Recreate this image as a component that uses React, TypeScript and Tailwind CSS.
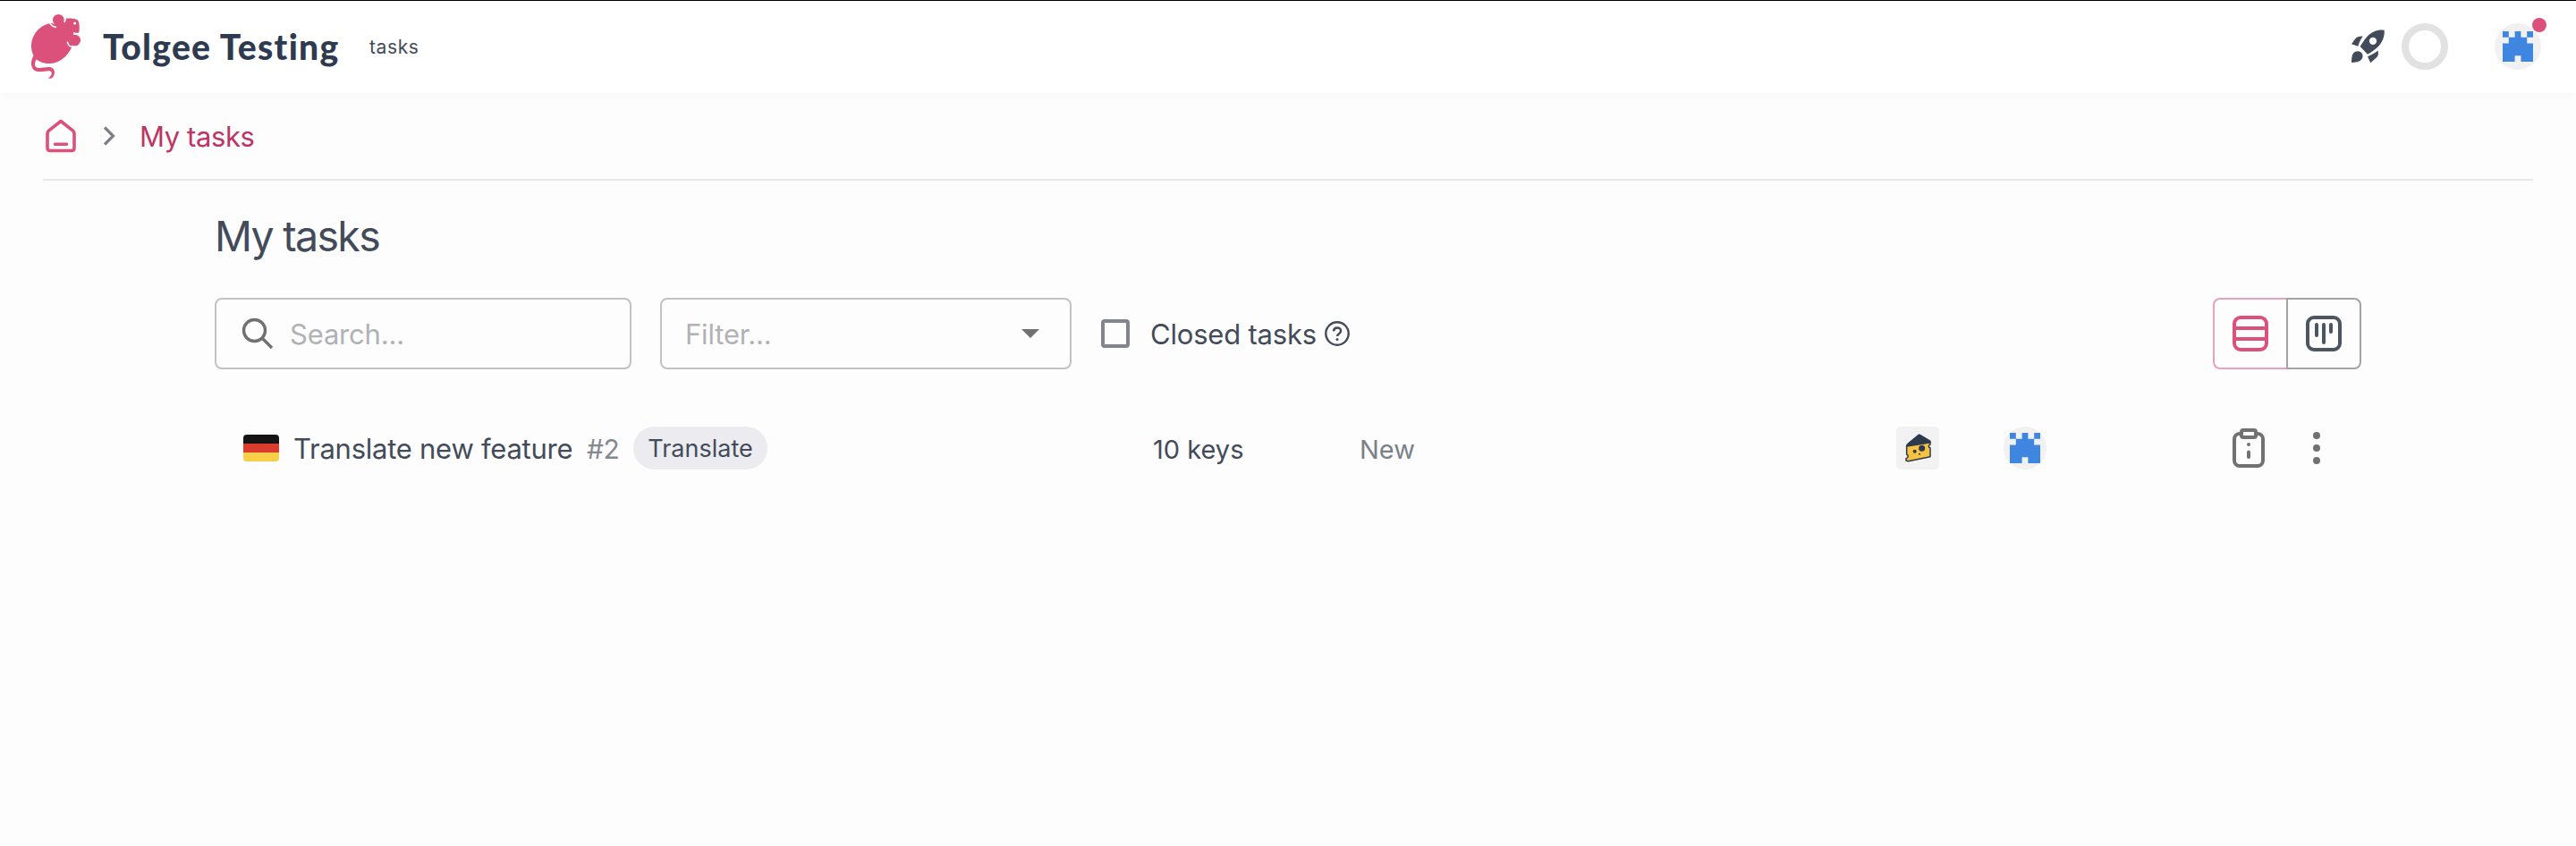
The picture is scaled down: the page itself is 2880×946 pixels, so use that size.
const FONT = "font-['Inter','Liberation_Sans',sans-serif]";

function MouseLogo() {
  return (
    <svg className="size-[90px] shrink-0" viewBox="60 15 270 270" fill="none">
      <g fill="#dc517b">
        <path d="M172 77C131 85 105 116 105 157c0 12 4 25 11 35 9 13 26 21 49 21 34 0 60-22 77-57l-8-68-40-4z" />
        <circle cx="196" cy="67" r="19" />
        <path d="M194 92l27-30c16-1 32 1 39 5 6 6 8 24 5 43l-18 3-8 30-34-8z" />
        <circle cx="251" cy="135" r="19" />
        <path d="M113 186c-10 16-11 36-1 47 13 13 38 5 52 5 12 0 14 14-3 25 8 1 14 0 17-5 9-13 6-30-11-33-16-2-38 8-47-1-5-6-4-17 6-30z" />
      </g>
      <path d="M167 77c7 10 12 14 22 14M219 58c1 7 0 12-4 17" stroke="#fff" strokeWidth="5" />
      <path d="M226 140c1 10 9 18 21 18M246 110c6 3 14 4 23 1" stroke="#fff" strokeWidth="5" />
      <circle cx="251" cy="78" r="4.500" fill="#fff" />
    </svg>
  );
}

function Rocket() {
  return (
    <svg className="h-[40px] w-[40px]" viewBox="84 96 120 120" fill="#434b5a">
      <path
        fillRule="evenodd"
        d="M197 101c-22-3-42 5-57 21-9 10-17 22-24 34l25 26c12-6 24-14 35-25 14-15 23-34 21-56zM159 125a12.500 12.500 0 1 1 0 25 12.500 12.500 0 0 1 0-25z"
      />
      <path d="M87 148l13-18c5-6 14-9 25-8-7 9-12 19-16 33z" />
      <path d="M141 190c11-5 22-11 35-20 2 9 1 17-5 23l-20 18z" />
      <path d="M87 210c0-12 1-21 4-28 7-13 26-14 32-1 4 10 0 19-9 24-7 3-16 5-27 5z" />
    </svg>
  );
}

function Castle({ className }: { className: string }) {
  return (
    <span className={`flex items-center justify-center rounded-full bg-[#f1f1f1] ${className}`}>
      <svg className="size-[34px]" viewBox="0 0 5 5" fill="#3f86e0">
        <path d="M0 0h1v1H0zM2 0h1v1h1V0h1v1H4v1h1v3H3V4H2v1H0V2h1V1h1z" />
      </svg>
    </span>
  );
}

function Cheese() {
  return (
    <span className="block size-[48px] rounded-[5px] bg-[#f2f2f2]">
      <svg className="size-[48px]" viewBox="120 81 144 144">
        <path
          d="M155 147l79-13v8c-7 1-7 9 0 10v30l-74 15-7-2v-7c8-2 9-11 2-13z"
          fill="#f5c242"
          stroke="#2c3a50"
          strokeWidth="4.500"
          strokeLinejoin="round"
        />
        <path d="M152 148c2-8 6-11 11-15l31-26c3-1 5-1 8 1l30 18c4 2 5 5 5 10z" fill="#2c3a50" />
        <circle cx="206" cy="154" r="10.500" fill="#2c3a50" />
        <circle cx="182" cy="164" r="6" fill="#2c3a50" />
        <circle cx="198" cy="173" r="3" fill="#2c3a50" />
      </svg>
    </span>
  );
}

function Header() {
  return (
    <header className="relative flex h-[104px] items-center border-t border-black bg-white pr-[39px] pl-[20px] shadow-[0_1px_12px_rgba(60,60,90,0.035)]">
      <span className="-mt-[5px]">
        <MouseLogo />
      </span>
      <span className="ml-[5px] w-[298px] font-['Lato','Liberation_Sans',sans-serif] text-[39px] leading-none font-black tracking-[1.3px] whitespace-nowrap text-[#2e3a4f]">
        Tolgee Testing
      </span>
      <span className="text-[21px] leading-none tracking-[0.6px]">tasks</span>
      <div className="-mt-[1px] ml-auto flex items-center">
        <Rocket />
        <span className="ml-[17px] size-[52px] rounded-full border-[8px] border-[#e2e2e2]" />
        <span className="relative ml-[52px]">
          <Castle className="size-[52px]" />
          <span className="absolute -top-[6px] right-[-6px] size-[16px] rounded-full bg-[#dc517b]" />
        </span>
      </div>
    </header>
  );
}

function Breadcrumbs() {
  return (
    <nav className="mx-[48px] flex h-[98px] items-center border-b-2 border-[#e6e7ea]">
      <svg className="ml-[2px] h-[38px] w-[36px]" viewBox="0 0 36 38" fill="none" stroke="#dc517b" strokeWidth="3.600" strokeLinecap="round" strokeLinejoin="round">
        <path d="M3 16.500c0-1.800.6-2.600 1.800-3.600L18 2.500l13.200 10.400c1.200 1 1.800 1.800 1.800 3.600v16c0 2-1 3-3 3H6c-2 0-3-1-3-3zM11.500 28.300h13" />
      </svg>
      <svg className="ml-[29px] h-[24px] w-[16px]" viewBox="0 0 16 24" fill="none" stroke="#7b7f86" strokeWidth="3.200">
        <path d="M2 2.500l9.500 9.500-9.500 9.500" />
      </svg>
      <span className="ml-[25px] text-[31px] leading-none tracking-[-0.4px] text-[#bd3565]">My tasks</span>
    </nav>
  );
}

function Toolbar() {
  return (
    <div className="flex h-[80px] items-center">
      <div className="flex h-[80px] w-[466px] items-center rounded-[8px] border-2 border-[#c2c2c5] pl-[28px]">
        <svg className="size-[36px]" viewBox="0 0 36 36" fill="none" stroke="#717171" strokeWidth="3.400">
          <circle cx="14.500" cy="14.500" r="12" />
          <path d="M23 23l11 11" />
        </svg>
        <span className="mt-[1px] ml-[18px] text-[31px] leading-none tracking-[-0.19px] text-[#b0b2b6]">Search...</span>
      </div>
      <div className="ml-[32px] flex h-[80px] w-[460px] items-center rounded-[8px] border-2 border-[#c2c2c5] pr-[34px] pl-[26px]">
        <span className="mt-[1px] text-[31px] leading-none tracking-[-0.18px] text-[#b0b2b6]">Filter...</span>
        <svg className="ml-auto h-[10px] w-[20px]" viewBox="0 0 20 10" fill="#717171">
          <path d="M0 0h20L10 10z" />
        </svg>
      </div>
      <span className="ml-[33px] size-[32px] rounded-[4px] border-[4px] border-[#82858d]" />
      <span className="ml-[23px] text-[31px] leading-none tracking-[-0.2px]">Closed tasks</span>
      <svg className="-mt-[1px] ml-[9px] size-[28px]" viewBox="0 0 28 28" fill="none" stroke="#434b5a" strokeWidth="2.400">
        <circle cx="14" cy="14" r="12.700" />
        <path d="M10 11.300c.2-2.300 1.800-3.700 4-3.700 2.300 0 4.100 1.400 4.100 3.500 0 3.200-4 3-4 5.900" strokeWidth="2.500" />
        <circle cx="14" cy="20.600" r="1.500" fill="#434b5a" stroke="none" />
      </svg>
      <div className="ml-auto flex h-[80px]">
        <span className="flex w-[82px] items-center justify-center rounded-l-[8px] border-2 border-r-0 border-[#e6a3ba]">
          <svg className="size-[40px]" viewBox="0 0 40 40" fill="none" stroke="#dc517b" strokeWidth="4">
            <rect x="2" y="2" width="36" height="36" rx="7" />
            <path d="M2 14h36M2 26h36" />
          </svg>
        </span>
        <span className="flex w-[84px] items-center justify-center rounded-r-[8px] border-2 border-[#a4a4a7]">
          <svg className="size-[40px]" viewBox="0 0 40 40" fill="none" stroke="#4d5563" strokeWidth="4" strokeLinecap="round">
            <rect x="2" y="2" width="36" height="36" rx="7" />
            <path d="M12 10v12M20 10v20M28 10v8" />
          </svg>
        </span>
      </div>
    </div>
  );
}

function TaskRow() {
  return (
    <div className="mt-[58px] flex h-[60px] items-center pl-[32px]">
      <span className="flex h-[30px] w-[40px] flex-col overflow-hidden rounded-[4px]">
        <span className="flex-1 bg-[#141414]" />
        <span className="flex-1 bg-[#dc3c2e]" />
        <span className="flex-1 bg-[#f5d048]" />
      </span>
      <span className="mt-[1px] ml-[16px] w-[328px] text-[31px] leading-none tracking-[-0.25px] whitespace-nowrap">Translate new feature</span>
      <span className="mt-[1px] w-[52px] text-[30px] leading-none tracking-[-0.5px] text-[#85888f]">#2</span>
      <span className="flex h-[48px] w-[150px] items-center justify-center rounded-full bg-[#ebebf0] text-[27px] leading-none">Translate</span>
      <span className="mt-[2px] ml-[431px] w-[231px] text-[29px] leading-none">10 keys</span>
      <span className="mt-[2px] text-[29px] leading-none text-[#7c8088]">New</span>
      <div className="mr-[46px] ml-auto flex items-center">
        <Cheese />
        <Castle className="ml-[72px] size-[48px]" />
        <svg className="ml-[208px] h-[44px] w-[36px]" viewBox="0 0 36 44" fill="none" stroke="#717171" strokeWidth="4" strokeLinecap="round" strokeLinejoin="round">
          <path d="M9 6H8a6 6 0 0 0-6 6v24a6 6 0 0 0 6 6h20a6 6 0 0 0 6-6V12a6 6 0 0 0-6-6h-1" />
          <rect x="10" y="2" width="16" height="8" rx="2" />
          <path d="M18 26.500v5.500" />
          <circle cx="18" cy="18" r="2" fill="#717171" stroke="none" />
        </svg>
        <svg className="ml-[54px] h-[36px] w-[8px]" viewBox="0 0 8 36" fill="#717171">
          <circle cx="4" cy="4" r="4" />
          <circle cx="4" cy="18" r="4" />
          <circle cx="4" cy="32" r="4" />
        </svg>
      </div>
    </div>
  );
}

export default function App() {
  return (
    <div className={`h-[946px] w-[2880px] overflow-hidden bg-[#fdfdfe] text-[#434b5a] ${FONT}`}>
      <Header />
      <Breadcrumbs />
      <main className="mx-[240px] pt-[37px]">
        <h1 className="flex h-[50px] items-center text-[46.500px] leading-none tracking-[-1.7px]">My tasks</h1>
        <div className="mt-[44px]">
          <Toolbar />
        </div>
        <TaskRow />
      </main>
    </div>
  );
}
